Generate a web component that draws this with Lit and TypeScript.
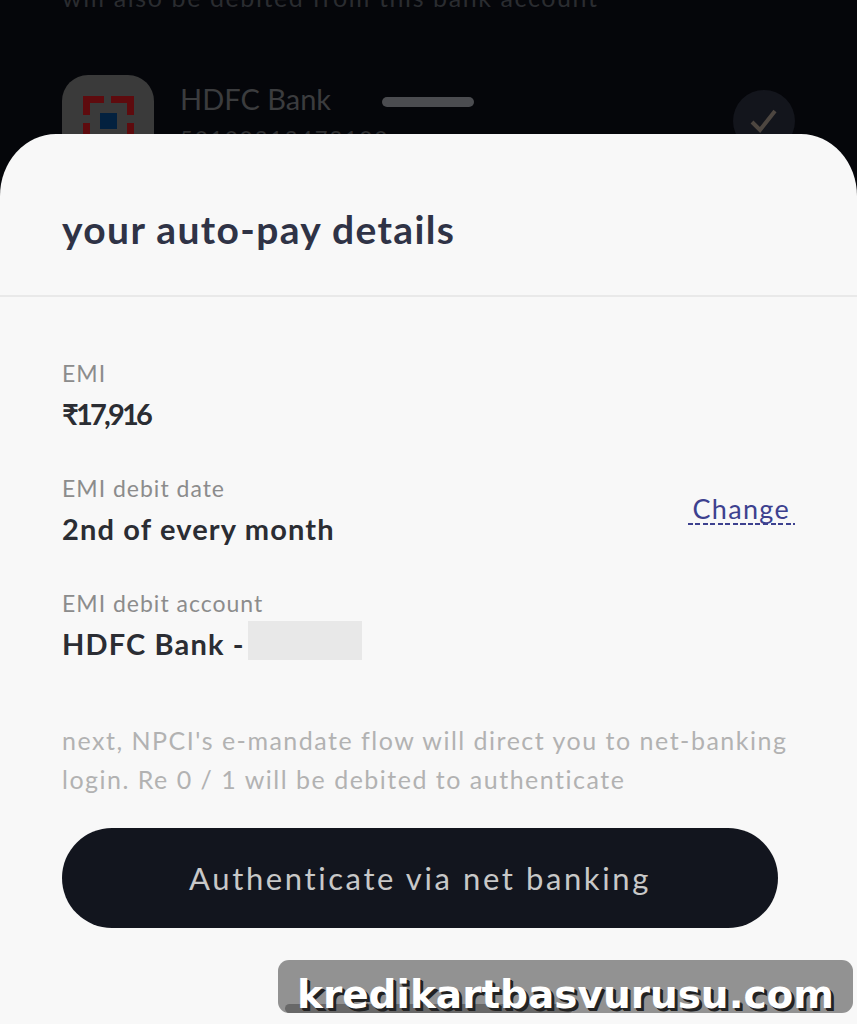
import { LitElement, html, css } from "lit";
import { customElement } from "lit/decorators.js";

const rows = [
  { label: "EMI", value: "₹17,916", amount: true },
  { label: "EMI debit date", value: "2nd of every month", change: true },
  { label: "EMI debit account", value: "HDFC Bank -", masked: true },
];

@customElement("app-root")
export class AppRoot extends LitElement {
  static styles = css`
    :host {
      display: flex;
      flex-direction: column;
      position: relative;
      height: 1024px;
      overflow: hidden;
      background: #05060a;
      font-family: Lato, "Liberation Sans", sans-serif;
    }
    .backdrop {
      height: 134px;
      flex: none;
      overflow: hidden;
      padding: 0 62px;
      box-sizing: border-box;
    }
    .behind-text {
      margin: -20px 0 0;
      height: 34px;
      font-size: 25px;
      line-height: 34px;
      letter-spacing: 1.6px;
      color: #2a2c30;
      white-space: nowrap;
    }
    .bank {
      display: flex;
      margin-top: 61px;
      align-items: flex-start;
    }
    .bank-logo {
      width: 92px;
      height: 92px;
      border-radius: 26px;
      background: #3a3a3a;
      flex: none;
      display: flex;
      justify-content: center;
      padding-top: 21px;
      box-sizing: border-box;
    }
    .bank-info {
      margin-left: 26px;
      flex: 1;
      color: #3b3c3e;
    }
    .bank-name {
      font-size: 29px;
      line-height: 34px;
      margin-top: 7px;
    }
    .bank-num {
      font-size: 22px;
      line-height: 30px;
      letter-spacing: 2.2px;
      margin-top: 7px;
      color: #2e2f31;
    }
    .check {
      width: 62px;
      height: 62px;
      border-radius: 50%;
      background: #13151c;
      flex: none;
      margin-top: 15px;
      display: flex;
      align-items: center;
      justify-content: center;
    }
    .handle {
      position: absolute;
      left: 382px;
      top: 97px;
      width: 92px;
      height: 10px;
      border-radius: 5px;
      background: #4b4c50;
    }
    .sheet {
      flex: 1;
      background: #f8f8f8;
      border-radius: 56px 56px 0 0 / 62px 62px 0 0;
      display: flex;
      flex-direction: column;
    }
    .title {
      margin: 0;
      padding: 73px 62px 0;
      height: 163px;
      box-sizing: border-box;
      border-bottom: 2px solid #e9e9e9;
      font-size: 39px;
      line-height: 44px;
      font-weight: 700;
      letter-spacing: 1.35px;
      color: #2f3346;
    }
    .rows {
      padding: 60px 62px 0;
      display: flex;
      flex-direction: column;
      gap: 31px;
    }
    .row {
      display: flex;
      align-items: flex-start;
      justify-content: space-between;
      height: 84px;
    }
    .label {
      font-size: 23px;
      line-height: 32px;
      letter-spacing: 1px;
      color: #8c8c8c;
    }
    .value {
      display: flex;
      align-items: center;
      gap: 3px;
      font-size: 29px;
      line-height: 40px;
      margin-top: 5px;
      font-weight: 700;
      letter-spacing: 1.15px;
      color: #2b2d33;
    }
    .value.amount {
      letter-spacing: -2.8px;
    }
    .mask {
      width: 114px;
      height: 39px;
      background: #e8e8e8;
      align-self: flex-start;
      margin-top: -3px;
    }
    .change {
      font-size: 27px;
      line-height: 28px;
      letter-spacing: 1.3px;
      color: #3d418f;
      padding: 0 5px 2px;
      margin-top: 23px;
      background: repeating-linear-gradient(90deg, #3d418f 0 5px, transparent 5px 7.5px) bottom / 100% 2px no-repeat;
    }
    .note {
      margin: 50px 62px 0;
      font-size: 25px;
      line-height: 39px;
      letter-spacing: 1.5px;
      color: #b2b2b2;
    }
    .cta {
      margin: 29px 0 0 62px;
      width: 716px;
      height: 100px;
      border: 0;
      border-radius: 50px;
      background: #12151e;
      color: #c8c8c8;
      font-family: inherit;
      font-size: 31px;
      letter-spacing: 2.6px;
    }
    .home {
      position: absolute;
      left: 285px;
      top: 1004px;
      width: 288px;
      height: 9px;
      border-radius: 5px;
      background: #2a2a2a;
    }
    .watermark {
      position: absolute;
      left: 278px;
      top: 960px;
      width: 575px;
      height: 53px;
      border-radius: 11px;
      background: rgba(120, 120, 120, 0.8);
      color: #fff;
      font-family: "DejaVu Sans", sans-serif;
      font-weight: 700;
      font-size: 39px;
      line-height: 70px;
      text-align: center;
      text-shadow: 2px 2px 0 #222, 3px 3px 0 #222;
      white-space: nowrap;
    }
  `;

  render() {
    return html`
      <div class="backdrop">
        <p class="behind-text">will also be debited from this bank account</p>
        <div class="bank">
          <div class="bank-logo">
            <svg width="51" height="71" viewBox="0 0 51 71">
              <path fill="#5e0b0e" d="M0 0h21v7H7v12H0zM28 0h23v19h-7V7H28zM0 27h7v44H0zM44 27h7v44h-7z" />
              <rect x="17" y="17" width="17" height="16" fill="#03213f" />
            </svg>
          </div>
          <div class="bank-info">
            <div class="bank-name">HDFC Bank</div>
            <div class="bank-num">50100212472100</div>
          </div>
          <div class="check">
            <svg width="30" height="26" viewBox="0 0 30 26">
              <path d="M3 14l8 8L26 3" fill="none" stroke="#4d4640" stroke-width="4" />
            </svg>
          </div>
        </div>
      </div>
      <div class="handle"></div>
      <section class="sheet">
        <h1 class="title">your auto-pay details</h1>
        <div class="rows">
          ${rows.map(
            (r) => html`
              <div class="row">
                <div>
                  <div class="label">${r.label}</div>
                  <div class="value ${r.amount ? "amount" : ""}">
                    ${r.value}${r.masked ? html`<span class="mask"></span>` : ""}
                  </div>
                </div>
                ${r.change ? html`<span class="change">Change</span>` : ""}
              </div>
            `
          )}
        </div>
        <p class="note">next, NPCI's e-mandate flow will direct you to net-banking login. Re 0 / 1 will be debited to authenticate</p>
        <button class="cta">Authenticate via net banking</button>
      </section>
      <div class="home"></div>
      <div class="watermark">kredikartbasvurusu.com</div>
    `;
  }
}
